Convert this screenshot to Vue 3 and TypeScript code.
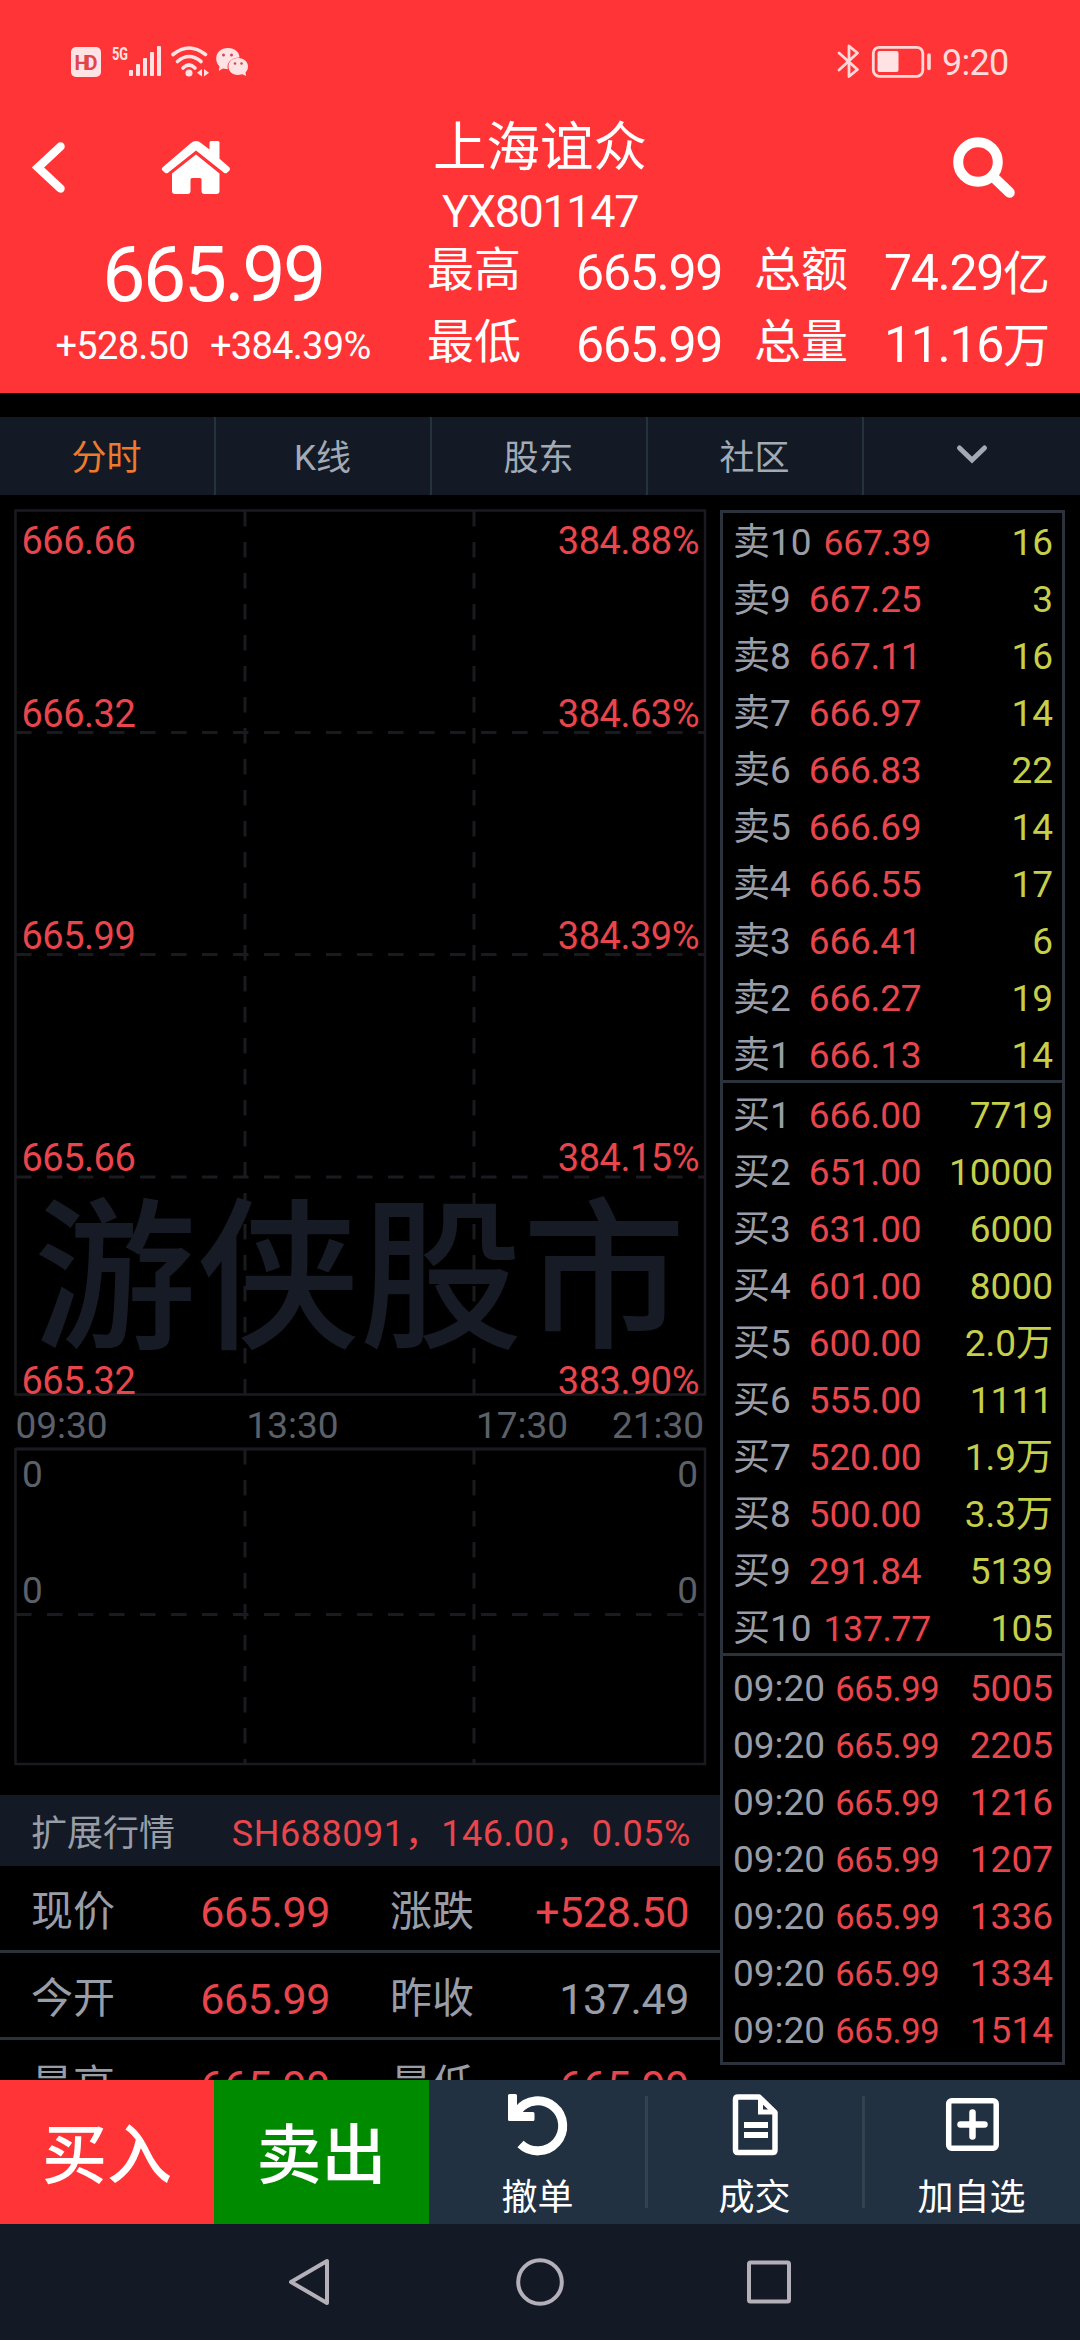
<script setup lang="ts">
interface Quote {
  label: string
  price: string
  amount: string
}

const tabs: string[] = ['分时', 'K线', '股东', '社区']

const sells: Quote[] = [
  { label: '卖10', price: '667.39', amount: '16' },
  { label: '卖9', price: '667.25', amount: '3' },
  { label: '卖8', price: '667.11', amount: '16' },
  { label: '卖7', price: '666.97', amount: '14' },
  { label: '卖6', price: '666.83', amount: '22' },
  { label: '卖5', price: '666.69', amount: '14' },
  { label: '卖4', price: '666.55', amount: '17' },
  { label: '卖3', price: '666.41', amount: '6' },
  { label: '卖2', price: '666.27', amount: '19' },
  { label: '卖1', price: '666.13', amount: '14' },
]

const buys: Quote[] = [
  { label: '买1', price: '666.00', amount: '7719' },
  { label: '买2', price: '651.00', amount: '10000' },
  { label: '买3', price: '631.00', amount: '6000' },
  { label: '买4', price: '601.00', amount: '8000' },
  { label: '买5', price: '600.00', amount: '2.0万' },
  { label: '买6', price: '555.00', amount: '1111' },
  { label: '买7', price: '520.00', amount: '1.9万' },
  { label: '买8', price: '500.00', amount: '3.3万' },
  { label: '买9', price: '291.84', amount: '5139' },
  { label: '买10', price: '137.77', amount: '105' },
]

const ticks: string[] = ['5005', '2205', '1216', '1207', '1336', '1334', '1514']

// y is the text baseline inside the chart
const levels = [
  { y: 59, price: '666.66', pct: '384.88%' },
  { y: 232, price: '666.32', pct: '384.63%' },
  { y: 454, price: '665.99', pct: '384.39%' },
  { y: 676, price: '665.66', pct: '384.15%' },
  { y: 899, price: '665.32', pct: '383.90%' },
]

const times = [
  { x: 15.5, text: '09:30' },
  { x: 246.5, text: '13:30' },
  { x: 476, text: '17:30' },
  { x: 612, text: '21:30' },
]
</script>

<template>
  <div class="app">
    <header class="header">
      <div class="status">
        <svg class="status-left" width="190" height="40" viewBox="65 42 190 40">
          <rect x="71" y="47" width="30" height="30" rx="5" fill="#ffe3e4" />
          <text x="86" y="69.5" class="hd" text-anchor="middle" textLength="23">HD</text>
          <text x="112" y="59.5" class="fiveg" textLength="16" lengthAdjust="spacingAndGlyphs">5G</text>
          <g fill="#ffe3e4">
            <rect x="129" y="70" width="4" height="6" rx="1" />
            <rect x="136" y="64" width="4" height="12" rx="1" />
            <rect x="143" y="58" width="4" height="18" rx="1" />
            <rect x="150" y="52" width="4" height="24" rx="1" />
            <rect x="157" y="46" width="4" height="30" rx="1" />
            <circle cx="189" cy="73" r="3.5" />
            <path d="M202 69v7.500l-5-3.800zM204 69v7.500l5-3.800z" />
          </g>
          <g fill="none" stroke="#ffe3e4" stroke-width="3.600" stroke-linecap="round">
            <path d="M173 54.500q16-13 32.500 0" />
            <path d="M177.500 61.500q11.500-10 23.500 0" />
            <path d="M183 68q6-6 12 0" />
          </g>
          <path d="M228 48c7 0 11.500 4.500 11.500 9.500-7 0-12 4-12 9.500l.3 2.300-5-.8-4 2.500.7-4.500c-2-2-3.300-5-3.300-8C216.200 52.500 221 48 228 48z" fill="#ffe3e4" />
          <path d="M238 58c6 0 10 3.800 10 8.500 0 2.500-1 4.500-2.500 6l.6 3.500-3.600-1.800-4.500.8c-6 0-9.500-4-9.500-8.500s3.500-8.500 9.500-8.500z" fill="#ffe3e4" />
          <g fill="#c94b52">
            <circle cx="223.500" cy="55" r="1.500" /><circle cx="231.500" cy="55" r="1.500" />
            <circle cx="235" cy="63.500" r="1.300" /><circle cx="241.500" cy="63.500" r="1.300" />
          </g>
        </svg>
        <svg width="100" height="40" viewBox="835 42 100 40" fill="none" stroke="#ffd9da">
          <path d="M839 53l18.500 16.500-8.500 7V46l8.500 7L839 70" stroke-width="2.800" stroke-linejoin="round" stroke-linecap="round" />
          <rect x="873.300" y="47.300" width="49.500" height="29" rx="6" stroke-width="2.800" />
          <rect x="877.500" y="51" width="21" height="21" rx="2" fill="#ffe3e4" stroke="none" />
          <path d="M929 55v13.500" stroke-width="3.600" stroke-linecap="round" />
        </svg>
        <span class="clock">9:20</span>
      </div>

      <div class="titlebar">
        <svg class="back" width="40" height="60" viewBox="29 138 40 60">
          <path d="M60.500 146.500L38 167.500l22.500 21" fill="none" stroke="#fff" stroke-width="8.500" stroke-linecap="round" />
        </svg>
        <svg class="home" width="70" height="60" viewBox="161 138 70 60" fill="#fff">
          <path d="M196 141q-3 0-5 2l-28 24q-2.500 2 0 4l2 1.800q1.500 1 3 0L196 150.500l28 22.300q1.500 1 3 0l2-1.800q2-2 0-4l-9.500-8.200V142.500q0-1.500-1.500-1.500h-7q-1.500 0-1.500 1.500v7l-8.500-6.500q-2-2-5-2z" />
          <path d="M196 154.500l23.500 19V191q0 3-3 3h-12q-3 0-3-3v-11.500q0-1.500-1.500-1.500h-8q-1.500 0-1.500 1.500V191q0 3-3 3h-12.500q-3 0-3-3v-17.500z" />
        </svg>
        <div class="title">
          <h1>上海谊众</h1>
          <div class="code">YX801147</div>
        </div>
        <svg class="search" width="66" height="66" viewBox="951 135 66 66" fill="none" stroke="#fff">
          <circle cx="978" cy="162" r="19.800" stroke-width="10" />
          <path d="M991 176.500l2.500 2.500" stroke-width="7" />
          <path d="M996 179.500l13.500 13" stroke-width="10.500" stroke-linecap="round" />
        </svg>
      </div>

      <div class="summary">
        <div class="now">
          <div class="price">665.99</div>
          <div class="change"><span>+528.50</span><span>+384.39%</span></div>
        </div>
        <div class="stats">
          <div class="stat-row">
            <span class="k">最高</span><span class="v v1">665.99</span>
            <span class="k">总额</span><span class="v v2">74.29<i>亿</i></span>
          </div>
          <div class="stat-row">
            <span class="k">最低</span><span class="v v1">665.99</span>
            <span class="k">总量</span><span class="v v2">11.16<i>万</i></span>
          </div>
        </div>
      </div>
    </header>

    <nav class="tabs">
      <div v-for="(t, i) in tabs" :key="t" class="tab" :class="{ active: i === 0 }">{{ t }}</div>
      <div class="tab">
        <svg width="34" height="24" viewBox="0 0 34 24">
          <path d="M4.500 5L17 17 29.500 5" fill="none" stroke="#a2abb5" stroke-width="5" stroke-linecap="round" />
        </svg>
      </div>
    </nav>

    <main class="content">
      <section class="left">
        <svg class="chart" width="720" height="1300" viewBox="0 0 720 1300">
          <g fill="none" stroke="#1a1b21" stroke-width="3">
            <rect x="15.500" y="15.500" width="689.500" height="884" stroke-width="2.500" />
            <rect x="15.500" y="954" width="689.500" height="315" stroke-width="2.500" />
            <path d="M16 954H705" />
            <g stroke-dasharray="15.500 15.500">
              <path d="M245 16V899M474 16V899M245 954V1269M474 954V1269" />
              <path d="M16 237.500H705M16 459.500H705M16 682H705M16 1119.500H705" />
            </g>
          </g>
          <text x="33.500" y="840" class="watermark">游侠股市</text>
          <g class="levels">
            <template v-for="l in levels" :key="l.price">
              <text x="21.500" :y="l.y">{{ l.price }}</text>
              <text x="699" :y="l.y" text-anchor="end">{{ l.pct }}</text>
            </template>
          </g>
          <g class="axis">
            <text v-for="t in times" :key="t.text" :x="t.x" y="943">{{ t.text }}</text>
            <text x="22" y="992">0</text>
            <text x="698" y="992" text-anchor="end">0</text>
            <text x="22" y="1108">0</text>
            <text x="698" y="1108" text-anchor="end">0</text>
          </g>
        </svg>

        <div class="extend">
          <span>扩展行情</span>
          <span class="red ext-value">SH688091，146.00，0.05%</span>
        </div>
        <div class="info">
          <span>现价</span><span class="num red">665.99</span>
          <span class="second">涨跌</span><span class="num red">+528.50</span>
        </div>
        <div class="info">
          <span>今开</span><span class="num red">665.99</span>
          <span class="second">昨收</span><span class="num">137.49</span>
        </div>
        <div class="info">
          <span>最高</span><span class="num red">665.99</span>
          <span class="second">最低</span><span class="num red">665.99</span>
        </div>
      </section>

      <aside class="book">
        <div class="group sell">
          <div v-for="q in sells" :key="q.label" class="row">
            <span class="label">{{ q.label }}</span>
            <span class="quote" :class="{ tight: q.label.length > 2 }">{{ q.price }}</span>
            <span class="amount">{{ q.amount }}</span>
          </div>
        </div>
        <div class="group buy">
          <div v-for="q in buys" :key="q.label" class="row">
            <span class="label">{{ q.label }}</span>
            <span class="quote" :class="{ tight: q.label.length > 2 }">{{ q.price }}</span>
            <span class="amount">{{ q.amount }}</span>
          </div>
        </div>
        <div class="group">
          <div v-for="n in ticks" :key="n" class="row tick">
            <span class="label">09:20</span>
            <span class="quote">665.99</span>
            <span class="amount">{{ n }}</span>
          </div>
        </div>
      </aside>
    </main>

    <footer class="actions">
      <div class="btn buy-btn">买入</div>
      <div class="btn sell-btn">卖出</div>
      <div class="act">
        <svg width="64" height="64" viewBox="504 2092 64 64">
          <path d="M516 2110.500a25 25 0 1 1 2.500 33.500" fill="none" stroke="#fff" stroke-width="9" />
          <path d="M506 2095.500q0-1.500 1.500-1.500h6q1.500 0 1.500 1.500v11l6 5.500h10q1.500 0 1.500 1.500v6q0 1.500-1.500 1.500h-23.500q-1.500 0-1.500-1.500z" fill="#fff" />
        </svg>
        <span>撤单</span>
      </div>
      <div class="act lined">
        <svg width="64" height="64" viewBox="722 2092 64 64" fill="none" stroke="#fff">
          <path d="M737 2097h21l16 15.500V2150q0 2.500-2.500 2.500H737q-2.500 0-2.500-2.500V2099.500q0-2.500 2.500-2.500z" stroke-width="5.500" stroke-linejoin="round" />
          <path d="M759.500 2097v15H774" stroke-width="5" />
          <path d="M746 2125h18M746 2135h18" stroke-width="6" stroke-linecap="square" />
        </svg>
        <span>成交</span>
      </div>
      <div class="act lined">
        <svg width="64" height="64" viewBox="940 2092 64 64" fill="none" stroke="#fff">
          <rect x="948.700" y="2100.700" width="47.500" height="47.500" rx="3" stroke-width="5.500" />
          <path d="M960.500 2124.500h24M972.500 2112.500v24" stroke-width="6.500" stroke-linecap="round" />
        </svg>
        <span>加自选</span>
      </div>
    </footer>

    <div class="sysnav">
      <svg width="1080" height="116" viewBox="0 2224 1080 116" fill="none" stroke="#b3b0ba" stroke-width="4" stroke-linejoin="round">
        <path d="M327 2261v42L291 2282z" />
        <circle cx="540" cy="2282" r="21.800" />
        <rect x="749" y="2262.500" width="40" height="39" rx="1.500" />
      </svg>
    </div>
  </div>
</template>

<style>
html,
body {
  margin: 0;
  background: #000;
}
</style>

<style scoped>
.app {
  width: 1080px;
  height: 2340px;
  display: flex;
  flex-direction: column;
  background: #000;
  overflow: hidden;
  font-family: Roboto, "Noto Sans CJK SC", sans-serif;
  color: #989da7;
  white-space: nowrap;
}
svg {
  display: block;
  flex: none;
}
.header {
  height: 393px;
  flex: none;
  background: #ff3437;
  color: #fff;
  box-sizing: border-box;
}
.status {
  display: flex;
  height: 82px;
  padding: 42px 0 0 65px;
  box-sizing: border-box;
}
.status-left {
  margin-right: 580px;
}
.hd {
  font: 700 20px Roboto, sans-serif;
  fill: #e0454c;
}
.fiveg {
  font: 700 19px Roboto, sans-serif;
  fill: #ffe3e4;
}
.clock {
  margin-left: 7px;
  font-size: 36px;
  line-height: 43px;
  letter-spacing: -0.7px;
  color: #ffdcdc;
}
.titlebar {
  display: flex;
  height: 155px;
}
.back {
  margin: 56px 0 0 29px;
}
.home {
  margin: 56px 0 0 92px;
}
.title {
  width: 618px;
  flex: none;
  text-align: center;
}
h1 {
  margin: 31px 0 0;
  font-size: 53.5px;
  font-weight: 400;
  line-height: 70px;
}
.code {
  font-size: 45px;
  line-height: 58px;
  letter-spacing: -1.4px;
}
.search {
  margin: 53px 0 0 102px;
}
.summary {
  display: flex;
}
.now {
  width: 426px;
  margin-right: 1px;
  flex: none;
  text-align: center;
}
.price {
  font-size: 77px;
  line-height: 76px;
  letter-spacing: -2.5px;
}
.change {
  display: flex;
  justify-content: center;
  gap: 21px;
  font-size: 38px;
  line-height: 66px;
  letter-spacing: -0.7px;
}
.stat-row {
  display: flex;
  height: 72px;
  line-height: 72px;
}
.k {
  width: 94px;
  font-size: 47px;
  line-height: 66px;
}
.v {
  text-align: right;
  font-size: 50px;
  letter-spacing: -1.3px;
}
.v i {
  font-style: normal;
  font-size: 47px;
  letter-spacing: 0;
}
.v1 {
  width: 201px;
  margin-right: 32px;
}
.v2 {
  width: 202px;
}
.tabs {
  display: flex;
  height: 78px;
  margin-top: 24px;
  flex: none;
  background: #141a25;
}
.tab {
  width: 216px;
  box-sizing: border-box;
  display: flex;
  align-items: center;
  justify-content: center;
  padding: 6px 1px 0 0;
  font-size: 35px;
  line-height: 72px;
  color: #a2abb5;
  border-right: 2px solid #26323a;
}
.tab:last-child {
  border-right: 0;
  padding: 0 0 2px;
}
.tab.active {
  color: #f07a2c;
}
.content {
  display: flex;
  height: 1585px;
  flex: none;
  overflow: hidden;
}
.left {
  width: 720px;
  flex: none;
}
.watermark {
  font: 500 163px "Noto Sans CJK SC", sans-serif;
  fill: #171b25;
}
.levels {
  font-size: 38px;
  letter-spacing: -0.5px;
  fill: #e9454c;
}
.axis {
  font-size: 37px;
  fill: #5b6069;
}
.extend {
  display: flex;
  justify-content: space-between;
  height: 71px;
  padding: 0 29px 0 31px;
  background: #141a25;
  font-size: 36px;
  line-height: 78px;
}
.ext-value {
  letter-spacing: 0.55px;
}
.red {
  color: #e9454c;
}
.info {
  display: flex;
  height: 84px;
  border-bottom: 3px solid #2d3239;
  padding: 0 28px 0 31px;
  font-size: 42px;
  line-height: 92px;
}
.num {
  width: 215px;
  text-align: right;
  font-size: 43px;
  letter-spacing: -0.4px;
}
.second {
  margin-left: 60px;
}
.info > span:not(.num) {
  width: 84px;
}
.book {
  width: 339px;
  height: 1549px;
  margin-top: 15px;
  flex: none;
  border: 3px solid #2c323b;
}
.group {
  box-sizing: border-box;
  padding: 4px 9px 0 10px;
}
.sell {
  height: 570px;
  padding-top: 1px;
  border-bottom: 3px solid #2c323b;
}
.buy {
  height: 573px;
  border-bottom: 3px solid #2c323b;
}
.row {
  display: flex;
  height: 57px;
  align-items: baseline;
  line-height: 57px;
  font-size: 37px;
}
.row .label {
  margin-right: 18px;
  font-size: 37px;
}
.quote {
  color: #e9454c;
  letter-spacing: -0.2px;
}
.quote.tight {
  font-size: 35.5px;
  margin-left: -6px;
  letter-spacing: -0.3px;
}
.amount {
  margin-left: auto;
  color: #c6cf4a;
}
.tick .label {
  margin-right: 10px;
}
.tick .quote {
  font-size: 34.500px;
  letter-spacing: -0.3px;
}
.tick .amount {
  color: #e9454c;
}
.actions {
  display: flex;
  height: 144px;
  flex: none;
  background: #213142;
  color: #fff;
}
.btn {
  width: 215px;
  height: 144px;
  font-size: 65px;
  font-weight: 500;
  line-height: 153px;
  text-align: center;
}
.buy-btn {
  width: 214px;
  background: #ff3437;
}
.sell-btn {
  background: #008a00;
}
.act {
  position: relative;
  flex: 1;
  display: flex;
  flex-direction: column;
  align-items: center;
  padding-top: 12px;
  font-size: 36px;
  line-height: 84px;
}
.act.lined::before {
  content: "";
  position: absolute;
  left: -1px;
  top: 16px;
  width: 3px;
  height: 112px;
  background: #33424f;
}
.sysnav {
  height: 116px;
  flex: none;
  background: #141a25;
}
</style>
